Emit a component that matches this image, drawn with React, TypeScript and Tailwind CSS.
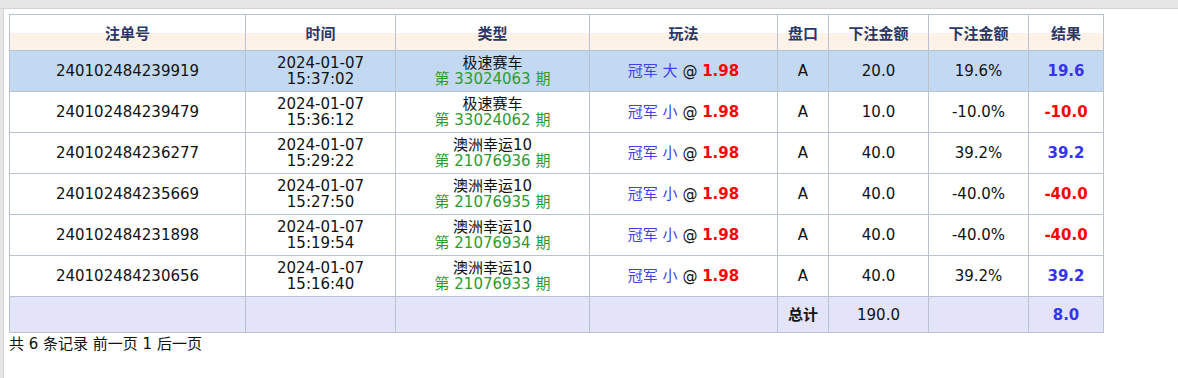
import React from "react";

type Bet = {
  id: string;
  date: string;
  time: string;
  game: string;
  issue: string;
  pick: string;
  amount: string;
  rate: string;
  result: string;
  win: boolean;
};

const bets: Bet[] = [
  { id: "240102484239919", date: "2024-01-07", time: "15:37:02", game: "极速赛车", issue: "33024063", pick: "大", amount: "20.0", rate: "19.6%", result: "19.6", win: true },
  { id: "240102484239479", date: "2024-01-07", time: "15:36:12", game: "极速赛车", issue: "33024062", pick: "小", amount: "10.0", rate: "-10.0%", result: "-10.0", win: false },
  { id: "240102484236277", date: "2024-01-07", time: "15:29:22", game: "澳洲幸运10", issue: "21076936", pick: "小", amount: "40.0", rate: "39.2%", result: "39.2", win: true },
  { id: "240102484235669", date: "2024-01-07", time: "15:27:50", game: "澳洲幸运10", issue: "21076935", pick: "小", amount: "40.0", rate: "-40.0%", result: "-40.0", win: false },
  { id: "240102484231898", date: "2024-01-07", time: "15:19:54", game: "澳洲幸运10", issue: "21076934", pick: "小", amount: "40.0", rate: "-40.0%", result: "-40.0", win: false },
  { id: "240102484230656", date: "2024-01-07", time: "15:16:40", game: "澳洲幸运10", issue: "21076933", pick: "小", amount: "40.0", rate: "39.2%", result: "39.2", win: true },
];

const headers = ["注单号", "时间", "类型", "玩法", "盘口", "下注金额", "下注金额", "结果"];
const widths = ["w-[236px]", "w-[150px]", "w-[194px]", "w-[188px]", "w-[51px]", "w-[100px]", "w-[100px]", "w-[75px]"];

const cell = "border border-[#b9c3d0] p-0 text-center align-middle";

export default function App() {
  return (
    <div className="flex flex-col w-[1178px] h-[378px] bg-white text-[15px] leading-[16px] text-[#111] font-['DejaVu_Sans','Noto_Sans_CJK_SC',sans-serif]">
      <div className="h-[9px] shrink-0 bg-[#e6e6e6] border-b border-[#d3d3d3]" />
      <div className="flex flex-1">
        <div className="w-[4px] shrink-0 bg-[#e6e6e6] border-r border-[#d3d3d3]" />
        <div className="pl-[5px] pt-[5px]">
          <table className="table-fixed border-collapse w-[1094px]">
            <colgroup>
              {widths.map((w, i) => (
                <col key={i} className={w} />
              ))}
            </colgroup>
            <thead>
              <tr className="h-[36px] bg-[linear-gradient(to_bottom,#ffffff_50%,#fdf2e8_50%)]">
                {headers.map((h, i) => (
                  <th key={i} className={`${cell} font-bold text-[#2d3766] pt-[2px]`}>
                    {h}
                  </th>
                ))}
              </tr>
            </thead>
            <tbody>
              {bets.map((b, i) => (
                <tr key={b.id} className={`h-[41px] ${i === 0 ? "bg-[#c3d9f1]" : "bg-white"}`}>
                  <td className={cell}>{b.id}</td>
                  <td className={cell}>
                    <div>{b.date}</div>
                    <div>{b.time}</div>
                  </td>
                  <td className={cell}>
                    <div>{b.game}</div>
                    <div className="text-[#2f9a2f]">第 {b.issue} 期</div>
                  </td>
                  <td className={cell}>
                    <span className="text-[#4040f0]">冠军 {b.pick}</span> @{" "}
                    <b className="text-[#ff0000]">1.98</b>
                  </td>
                  <td className={cell}>A</td>
                  <td className={cell}>{b.amount}</td>
                  <td className={cell}>{b.rate}</td>
                  <td className={`${cell} font-bold ${b.win ? "text-[#3434f0]" : "text-[#ff0000]"}`}>
                    {b.result}
                  </td>
                </tr>
              ))}
              <tr className="h-[36px] bg-[#e3e4f7]">
                <td className={cell} />
                <td className={cell} />
                <td className={cell} />
                <td className={cell} />
                <td className={`${cell} font-bold`}>总计</td>
                <td className={cell}>190.0</td>
                <td className={cell} />
                <td className={`${cell} font-bold text-[#3434f0]`}>8.0</td>
              </tr>
            </tbody>
          </table>
          <div className="mt-[3px]">共 6 条记录 前一页 1 后一页</div>
        </div>
      </div>
    </div>
  );
}
